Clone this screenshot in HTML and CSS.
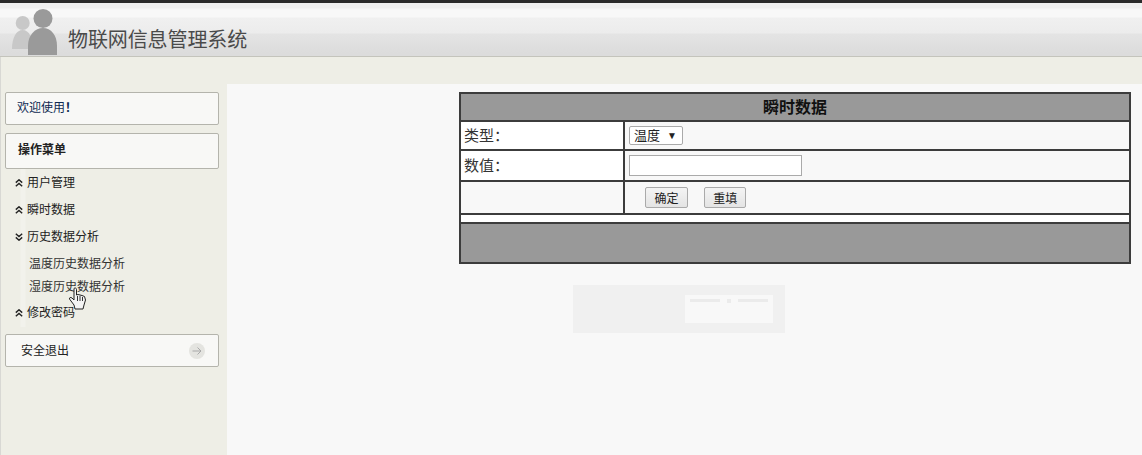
FILE: index.html
```html
<!DOCTYPE html>
<html lang="zh-CN">
<head>
    <meta charset="UTF-8">
    <title>物联网信息管理系统</title>
    <link rel="stylesheet" href="styles.css">
</head>
<body>
    <div class="header">
        <svg class="logo" width="50" height="48" viewBox="0 0 50 48">
            <circle cx="11.7" cy="15" r="7" fill="#c8c8c8"/>
            <path d="M1 41 C1 30 5 22 11.7 22 C18 22 22 30 22 41 Z" fill="#c8c8c8"/>
            <circle cx="32" cy="10.5" r="9.5" fill="#9a9a9a"/>
            <path d="M17 47 L17 38 C17 27 24 20 32 20 C40 20 46 27 46 38 L46 47 Z" fill="#9a9a9a"/>
        </svg>
        <h1 class="site-title">物联网信息管理系统</h1>
    </div>
    <div class="page">
        <div class="sidebar">
            <div class="side-box welcome">欢迎使用<b>！</b></div>
            <div class="side-box menu-title">操作菜单</div>
            <ul class="menu">
                <li>
                    <svg class="arrow" width="8" height="8" viewBox="0 0 8 8"><path d="M.8 3.6 L4 .8 L7.2 3.6 M.8 7.2 L4 4.4 L7.2 7.2" fill="none" stroke="#222" stroke-width="1.4"/></svg>
                    用户管理
                </li>
                <li>
                    <svg class="arrow" width="8" height="8" viewBox="0 0 8 8"><path d="M.8 3.6 L4 .8 L7.2 3.6 M.8 7.2 L4 4.4 L7.2 7.2" fill="none" stroke="#222" stroke-width="1.4"/></svg>
                    瞬时数据
                </li>
                <li>
                    <svg class="arrow" width="8" height="8" viewBox="0 0 8 8"><path d="M.8 .8 L4 3.6 L7.2 .8 M.8 4.4 L4 7.2 L7.2 4.4" fill="none" stroke="#222" stroke-width="1.4"/></svg>
                    历史数据分析
                </li>
                <li class="sub">温度历史数据分析</li>
                <li class="sub last">湿度历史数据分析</li>
                <li>
                    <svg class="arrow" width="8" height="8" viewBox="0 0 8 8"><path d="M.8 3.6 L4 .8 L7.2 3.6 M.8 7.2 L4 4.4 L7.2 7.2" fill="none" stroke="#222" stroke-width="1.4"/></svg>
                    修改密码
                </li>
            </ul>
            <div class="side-box logout">
                <span>安全退出</span>
                <svg class="logout-icon" width="16" height="16" viewBox="0 0 16 16">
                    <circle cx="8" cy="8" r="8" fill="#e4e4e0"/>
                    <path d="M3.5 8 H12 M8.5 4.5 L12 8 L8.5 11.5" fill="none" stroke="#a8a8a8" stroke-width="1"/>
                </svg>
            </div>
            <svg class="hand" width="20" height="24" viewBox="0 0 20 24">
                <path d="M6 1.5 C7 .5 8.5 1 8.5 2.5 L8.5 8 L10 7.5 L12 8 L14 8.5 L16.5 9.5 L17.5 13 L16 18 L15 22 L7 22 L6 18 L1.5 12 C1 10.5 2.5 10 4 11 L6 13 Z" fill="#f4f4f4" stroke="#222" stroke-width="1"/>
                <path d="M9.5 9 V14 M12 9 V14 M14.5 10 V14" stroke="#333" stroke-width="1" fill="none"/>
            </svg>
        </div>
        <div class="main">
            <table class="data-table">
                <tr class="head-row"><th colspan="2">瞬时数据</th></tr>
                <tr class="type-row">
                    <td class="label">类型：</td>
                    <td class="field">
                        <span class="select-wrap"><select class="type-select"><option>温度</option></select></span>
                    </td>
                </tr>
                <tr class="value-row">
                    <td class="label">数值：</td>
                    <td class="field"><input class="value-input" type="text"></td>
                </tr>
                <tr class="button-row">
                    <td></td>
                    <td class="field">
                        <button class="btn" type="submit">确定</button>
                        <button class="btn" type="reset">重填</button>
                    </td>
                </tr>
                <tr class="gap-row"><td colspan="2"></td></tr>
                <tr class="foot-row"><td colspan="2"></td></tr>
            </table>
            <div class="ghost">
                <div class="ghost-card">
                    <div class="ghost-line"></div>
                    <div class="ghost-dot"></div>
                    <div class="ghost-line"></div>
                </div>
            </div>
        </div>
    </div>
</body>
</html>
```

FILE: styles.css
```css
* {
    box-sizing: border-box;
}
html, body {
    height: 100%;
}
body {
    margin: 0;
    padding: 0;
    overflow: hidden;
    font-family: "Liberation Sans", "Noto Sans CJK SC", sans-serif;
    font-size: 12px;
    color: #222;
    background-color: #eeeee6;
}
.header {
    height: 57px;
    display: flex;
    align-items: flex-start;
    padding: 5px 0 0 11px;
    border-top: 3px solid #2b2b2b;
    border-bottom: 1px solid #c4c4bc;
    background: linear-gradient(to bottom, #f0f0f0 0, #f0f0f0 5px, #f8f8f8 6px, #f8f8f8 14px, #f0f0f0 15px, #ececec 30px, #e4e4e4 31px, #dcdcdc 50px);
}
.logo {
    flex: none;
}
.site-title {
    margin: 20px 0 0 7px;
    font-size: 20px;
    line-height: 24px;
    font-weight: normal;
    color: #4a4a4a;
    letter-spacing: -.1px;
}
.page {
    display: flex;
    height: 398px;
}
.sidebar {
    position: relative;
    width: 227px;
    flex: none;
    padding: 35px 8px 0 5px;
    border-left: 1px solid #d8d8d4;
}
.side-box {
    margin-left: -1px;
    background-color: #f8f8f6;
    border: 1px solid #b4b4ac;
    border-radius: 2px;
}
.welcome {
    height: 33px;
    padding-left: 11px;
    line-height: 31px;
    color: #0f2a52;
    margin-bottom: 8px;
}
.menu-title {
    height: 36px;
    padding-left: 12px;
    line-height: 32px;
    font-size: 12px;
    font-weight: bold;
    color: #222;
}
.menu {
    list-style: none;
    margin: 0;
    padding: 1px 0 0 0;
    background: linear-gradient(to right, transparent 14px, #f2f2ec 15px, #f2f2ec 19px, transparent 20px);
}
.menu li {
    height: 27px;
    line-height: 27px;
    padding-left: 9px;
    display: flex;
    align-items: center;
    color: #222;
}
.menu .sub {
    padding-left: 23px;
    color: #333;
}
.menu .last {
    height: 19px;
    line-height: 19px;
    margin-bottom: 3px;
}
.arrow {
    flex: none;
    margin: 0 4px 2px 0;
}
.logout {
    margin-top: 7px;
    height: 33px;
    display: flex;
    align-items: center;
    justify-content: space-between;
    padding: 0 13px 2px 15px;
}
.logout-icon {
    margin-top: 2px;
}
.hand {
    position: absolute;
    left: 67px;
    top: 230px;
}
.main {
    flex: 1;
    margin-top: 27px;
    padding: 8px 11px 0 232px;
    background-color: #f8f8f8;
}
.data-table {
    width: 672px;
    border-collapse: collapse;
    border: 2px solid #3c3c3c;
    font-size: 15px;
}
.data-table th,
.data-table td {
    border: 2px solid #3c3c3c;
    padding: 0 3px;
}
.head-row th {
    height: 28px;
    padding-bottom: 2px;
    background-color: #999;
    color: #111;
    font-size: 16px;
}
.type-row td {
    height: 29px;
}
.value-row td {
    height: 31px;
}
.button-row td {
    height: 33px;
}
.gap-row td {
    height: 9px;
    background-color: #fff;
    padding: 0;
}
.foot-row td {
    height: 40px;
    background-color: #999;
}
.data-table .label {
    width: 164px;
    padding-bottom: 2px;
    background-color: #fff;
    color: #333;
}
.data-table .field {
    background-color: #f8f8f8;
    padding-left: 4px;
}
.button-row .field {
    padding-bottom: 1px;
}
.select-wrap {
    position: relative;
    display: block;
    width: 54px;
}
.select-wrap::after {
    content: "▼";
    position: absolute;
    right: 6px;
    top: 5px;
    font-size: 10px;
    line-height: 9px;
    color: #222;
}
.type-select {
    display: block;
    width: 54px;
    height: 19px;
    padding-left: 4px;
    appearance: none;
    font-family: inherit;
    font-size: 13px;
    color: #222;
    background-color: #fff;
    border: 1px solid #aaa;
    border-radius: 2px;
}
.value-input {
    display: block;
    width: 173px;
    height: 21px;
    border: 1px solid #aaa;
    background-color: #fff;
}
.btn {
    width: 43px;
    height: 21px;
    margin-left: 16px;
    padding: 0;
    font-family: inherit;
    font-size: 12px;
    color: #222;
    background: linear-gradient(to bottom, #f4f4f4, #e4e4e4);
    border: 1px solid #aaa;
    border-radius: 2px;
}
.btn + .btn {
    width: 42px;
    margin-left: 12px;
}
.ghost {
    display: flex;
    justify-content: flex-end;
    align-items: center;
    width: 212px;
    height: 48px;
    margin: 21px 0 0 114px;
    padding-right: 12px;
    background-color: #f0f0f0;
}
.ghost-card {
    display: flex;
    align-items: flex-start;
    gap: 4px;
    width: 88px;
    height: 28px;
    padding: 4px 5px 0;
    background-color: #f8f8f8;
}
.ghost-line {
    flex: 1;
    height: 3px;
    background-color: #ebebeb;
}
.ghost-dot {
    width: 4px;
    height: 4px;
    margin: 0 3px;
    background-color: #ebebeb;
}
```
